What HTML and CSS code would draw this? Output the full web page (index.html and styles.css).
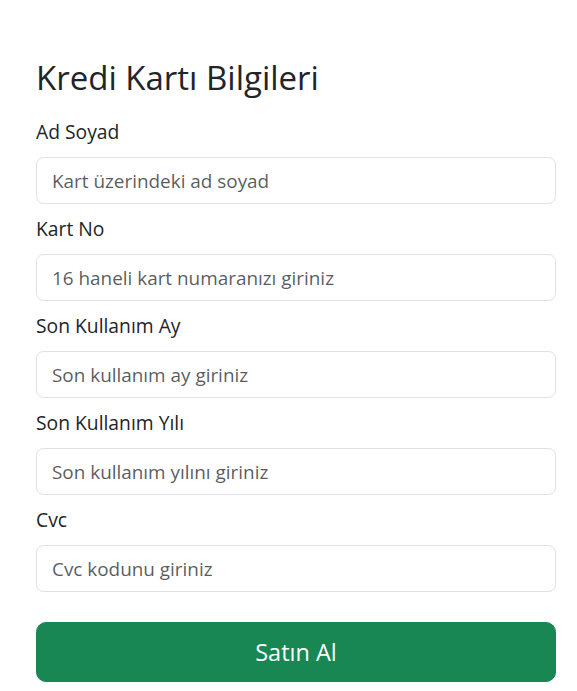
FILE: index.html
```html
<!DOCTYPE html>
<html lang="tr">
<head>
<meta charset="utf-8">
<title>Kredi Kartı Bilgileri</title>
<link rel="stylesheet" href="styles.css">
</head>
<body>
<main class="page">
  <h3 class="title">Kredi Kartı Bilgileri</h3>
  <form class="card-form">
    <div class="field">
      <label class="label" for="ad">Ad Soyad</label>
      <input class="input" id="ad" type="text" placeholder="Kart üzerindeki ad soyad">
    </div>
    <div class="field">
      <label class="label" for="no">Kart No</label>
      <input class="input" id="no" type="text" placeholder="16 haneli kart numaranızı giriniz">
    </div>
    <div class="field">
      <label class="label" for="ay">Son Kullanım Ay</label>
      <input class="input" id="ay" type="text" placeholder="Son kullanım ay giriniz">
    </div>
    <div class="field">
      <label class="label" for="yil">Son Kullanım Yılı</label>
      <input class="input" id="yil" type="text" placeholder="Son kullanım yılını giriniz">
    </div>
    <div class="field">
      <label class="label" for="cvc">Cvc</label>
      <input class="input" id="cvc" type="text" placeholder="Cvc kodunu giriniz">
    </div>
    <button class="btn" type="button">Satın Al</button>
  </form>
</main>
</body>
</html>
```

FILE: styles.css
```css
* { box-sizing: border-box; }
body {
  margin: 0;
  background: #fff;
  color: #212529;
  font-family: "Open Sans", "Noto Sans", sans-serif;
}
.page {
  padding: 57px 21px 0 36px;
}
.title {
  margin: 0 0 18px;
  font-size: 33px;
  font-weight: 400;
  line-height: 42px;
}
.card-form {
  display: flex;
  flex-direction: column;
}
.field {
  display: flex;
  flex-direction: column;
  margin-bottom: 10px;
}
.label {
  font-size: 19.3px;
  line-height: 30px;
  margin-bottom: 10px;
}
.input {
  height: 47px;
  padding: 0 15px;
  border: 1px solid #dee2e6;
  border-radius: 7.5px;
  font-family: inherit;
  font-size: 18.9px;
  color: #212529;
  background: #fff;
  outline: none;
}
.input::placeholder {
  color: rgba(33, 37, 41, 0.75);
}
.btn {
  margin-top: 20px;
  height: 60px;
  border: 1px solid #198754;
  border-radius: 10px;
  background: #198754;
  color: #fff;
  font-family: inherit;
  font-size: 23.5px;
}
```
